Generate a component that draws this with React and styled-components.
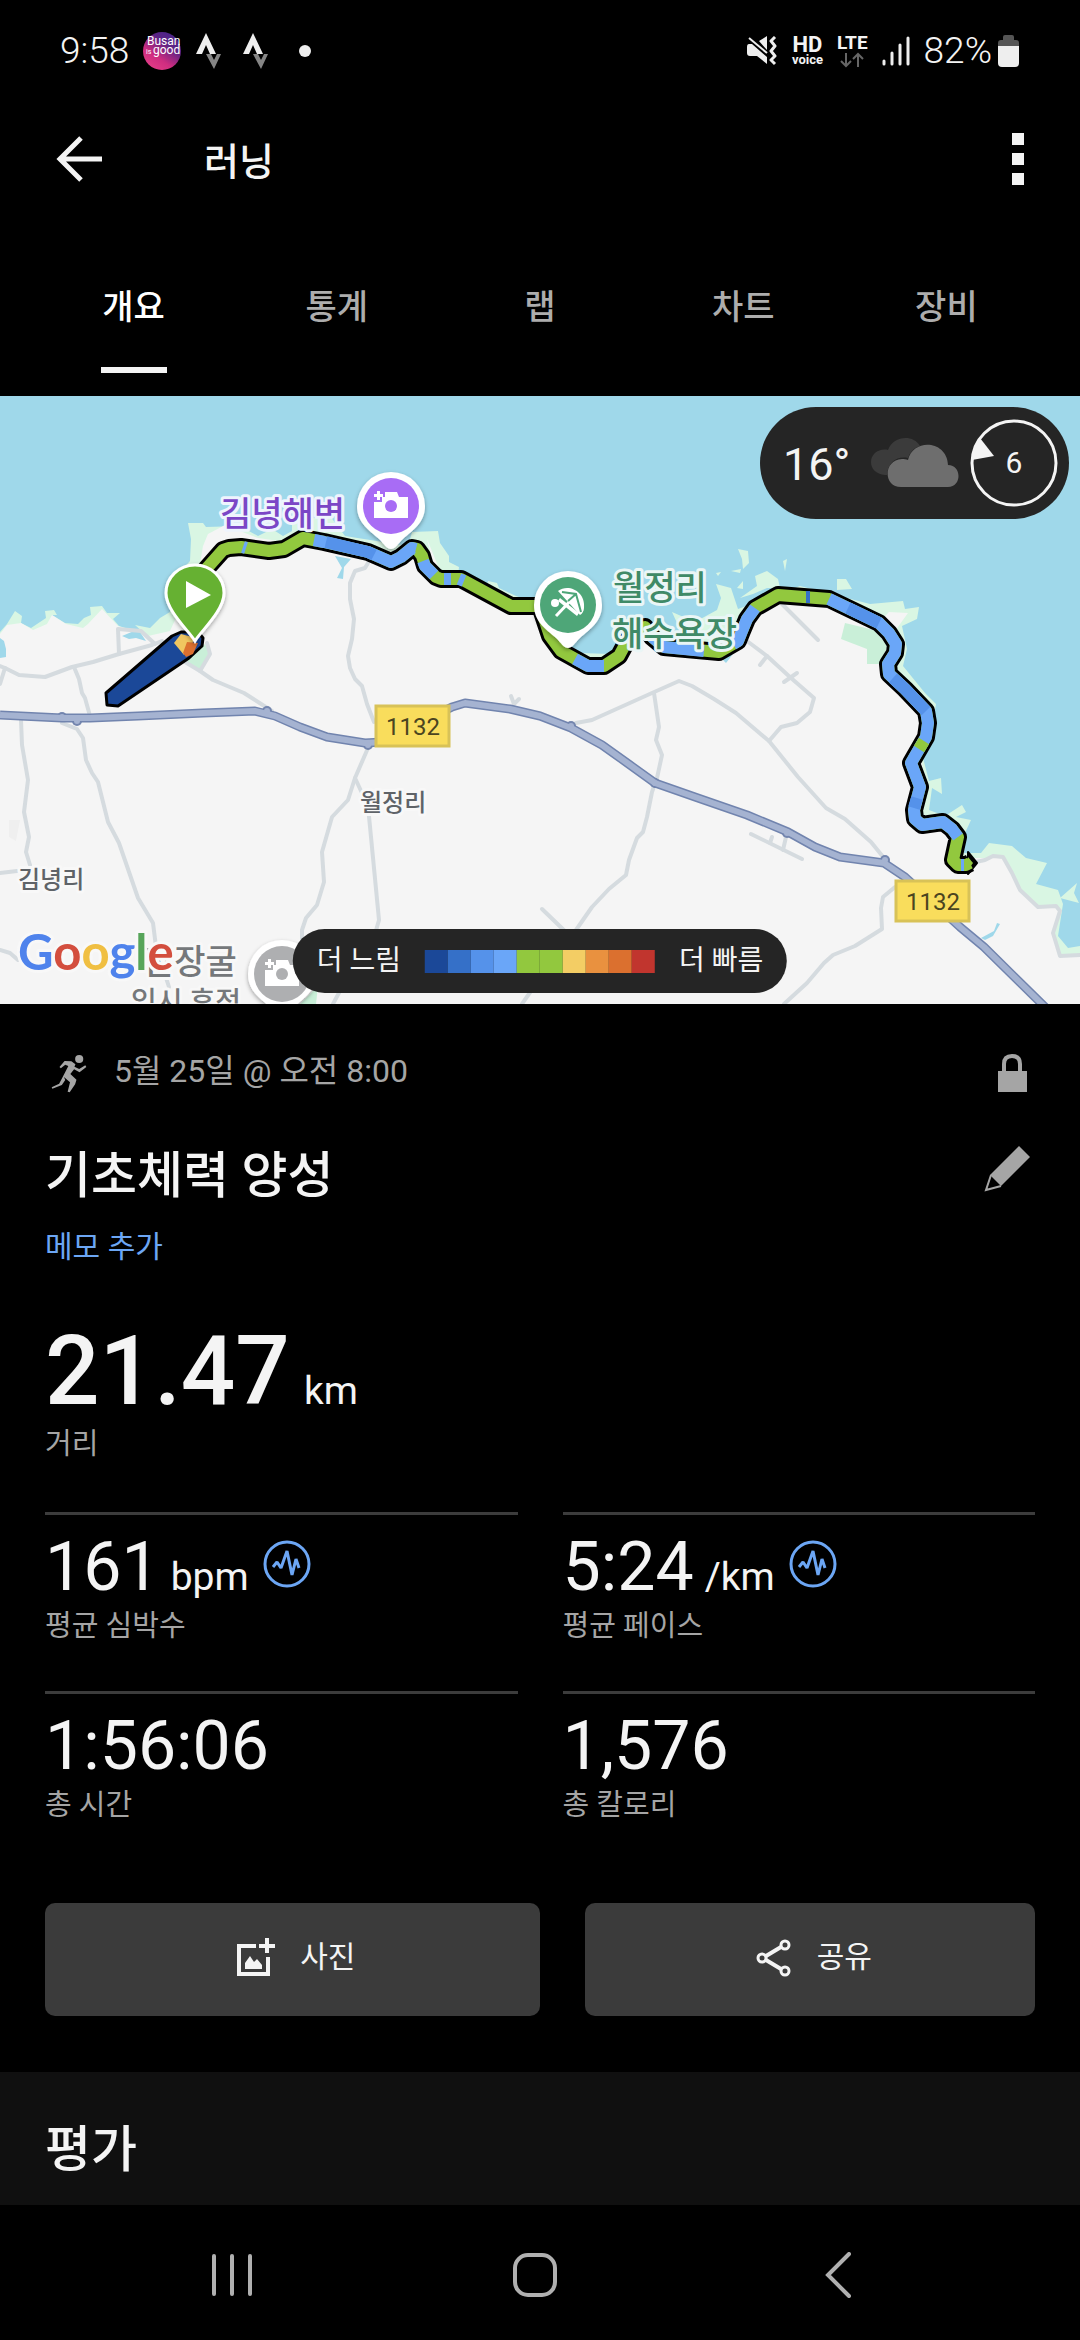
import React from 'react'
import styled, { createGlobalStyle } from 'styled-components'

const GlobalStyle = createGlobalStyle`
  * {
    box-sizing: border-box;
  }
  body {
    margin: 0;
    background: #000;
    color: #f4f4f4;
    font-family: Roboto, "Noto Sans CJK KR", sans-serif;
  }
  h1, h2, p, dl, dt, dd {
    margin: 0;
    font-weight: 400;
  }
  svg {
    display: block;
    flex: none;
  }
`

const IconButton = styled.button`
  display: flex;
  align-items: center;
  justify-content: center;
  padding: 0;
  border: 0;
  background: none;
  color: ${props => props.$color || '#f4f4f4'};
  cursor: pointer;
`

const StatusBar = styled.div`
  display: flex;
  align-items: center;
  justify-content: space-between;
  height: 102px;
  padding: 0 61px 0 60px;
`

const StatusGroup = styled.div`
  display: flex;
  align-items: center;
  gap: ${props => props.$gap}px;
`

const StatusText = styled.span`
  font-size: 37px;
  line-height: 40px;
  font-weight: 300;
`

const Battery = styled.div`
  display: flex;
  align-items: center;
  gap: 6px;
`

const Network = styled.div`
  display: flex;
  flex-direction: column;
  align-items: center;
  font-size: ${props => props.$size}px;
  line-height: 18px;
  font-weight: 700;
`

const NetworkSub = styled.span`
  font-size: 13px;
  line-height: 12px;
`

const AppBar = styled.header`
  display: flex;
  align-items: center;
  height: 114px;
  padding: 0 56px;
`

const AppTitle = styled.h1`
  flex: 1;
  margin-left: 102px;
  padding-top: 6px;
  font-size: 38px;
  line-height: 48px;
  font-weight: 500;
`

const Tabs = styled.nav`
  display: grid;
  grid-template-columns: repeat(5, 1fr);
  height: 180px;
  padding: 0 32px;
`

const Tab = styled.button`
  display: flex;
  justify-content: center;
  align-items: flex-start;
  padding: 0;
  border: 0;
  background: none;
  font-family: inherit;
  font-size: 34px;
  line-height: 40px;
  font-weight: 500;
  color: ${props => props.$active ? '#fff' : '#adadad'};
  cursor: pointer;
`

const TabLabel = styled.span`
  height: 157px;
  min-width: 66px;
  padding-top: 71px;
  text-align: center;
  border-bottom: 6px solid ${props => props.$active ? '#f4f4f4' : 'transparent'};
`

const MapArea = styled.section`
  position: relative;
  aspect-ratio: 1080 / 608;
  overflow: hidden;
  background: #9fd8ea;

  > svg {
    width: 100%;
    height: 100%;
  }
`

const Weather = styled.div`
  position: absolute;
  top: 11px;
  right: 11px;
  display: flex;
  align-items: center;
  height: 112px;
  padding: 0 11px 0 23px;
  border-radius: 56px;
  background: #252525;
`

const Temperature = styled.span`
  width: 88px;
  padding-top: 4px;
  font-size: 45px;
  line-height: 48px;
`

const Wind = styled.div`
  display: grid;
  place-items: center;
  margin-left: 11px;
  font-size: 30px;
  line-height: 36px;

  > * {
    grid-area: 1 / 1;
  }
`

const Legend = styled.div`
  position: absolute;
  bottom: 11px;
  left: 50%;
  transform: translateX(-50%);
  display: flex;
  align-items: center;
  gap: 24px;
  height: 64px;
  padding: 0 24px;
  border-radius: 32px;
  background: #252525;
  font-size: 28px;
  line-height: 40px;
  white-space: nowrap;
`

const Scale = styled.div`
  display: flex;
`

const Swatch = styled.span`
  width: 23px;
  height: 23px;
  background: ${props => props.$color};
`

const Summary = styled.main`
  padding: 45px 45px 56px;
`

const MetaRow = styled.div`
  display: flex;
  align-items: center;
  gap: 27px;
  height: 48px;
  padding: 0 4px 0 6px;
  font-size: 32px;
  line-height: 40px;
  color: #a5a5a5;
`

const DateText = styled.span`
  flex: 1;
  padding-bottom: 5px;
`

const TitleRow = styled.div`
  display: flex;
  align-items: center;
  justify-content: space-between;
  height: 60px;
  margin-top: 45px;
  padding-right: 4px;
`

const Heading = styled.h2`
  padding-top: 8px;
  font-size: 50px;
  line-height: 60px;
  font-weight: 500;
`

const MemoLink = styled.a`
  display: block;
  width: fit-content;
  margin-top: 25px;
  font-size: 30px;
  line-height: 40px;
  color: #6ca6f4;
  text-decoration: none;
`

const Distance = styled.dl`
  display: flex;
  flex-direction: column-reverse;
  margin-top: 56px;
`

const Value = styled.dd`
  display: flex;
  align-items: baseline;
  gap: ${props => props.$big ? 14 : 11}px;
  font-size: ${props => props.$big ? 96 : 68}px;
  line-height: ${props => props.$big ? 96 : 68}px;
  font-weight: ${props => props.$big ? 500 : 400};

  svg {
    align-self: flex-start;
    margin: 7px 0 0 3px;
  }
`

const Unit = styled.span`
  font-size: 39px;
  line-height: 48px;
  font-weight: 400;
`

const Caption = styled.dt`
  margin-top: 5px;
  font-size: 29px;
  line-height: 40px;
  color: #a5a5a5;
`

const StatGrid = styled.dl`
  display: grid;
  grid-template-columns: 1fr 1fr;
  gap: 45px;
  margin-top: 48px;
`

const Stat = styled.div`
  display: flex;
  flex-direction: column-reverse;
  padding-top: 18px;
  border-top: 3px solid #3c3c3c;
`

const Actions = styled.div`
  display: flex;
  gap: 45px;
  margin-top: 78px;
`

const ActionButton = styled.button`
  display: flex;
  flex: ${props => props.$grow} 1 0;
  align-items: center;
  justify-content: center;
  gap: 25px;
  height: 113px;
  padding: 0 0 4px 8px;
  border: 0;
  border-radius: 10px;
  background: #3b3b3b;
  color: #f4f4f4;
  font-family: inherit;
  font-size: 30px;
  line-height: 40px;
  cursor: pointer;
`

const ActionLabel = styled.span`
  padding-bottom: 2px;
`

const Rating = styled.section`
  height: 133px;
  padding: 40px 45px 0;
  background: #101010;
`

const NavBar = styled.nav`
  display: grid;
  grid-template-columns: repeat(3, 1fr);
  height: 135px;
  padding: 5px 91px 0 80px;
`

const TABS = ['개요', '통계', '랩', '차트', '장비']

const PACE_COLORS = [
  '#1b4898', '#3570c8', '#5592ea', '#6aa6f8', '#92c83e',
  '#92c83e', '#f3cd64', '#e9913f', '#db702f', '#c1352e'
]

const GREEN = '#92c83e'
const BLUE = '#6aa6f8'
const MID_BLUE = '#5592ea'

const ROUTE = '195,186 207,172 223,154 229,152 241,151 269,155 284,153 303,142 324,146 368,156 391,166 401,161 412,152 417,153 422,160 425,170 436,181 441,183 461,183 511,210 540,210 545,225 550,240 561,255 588,270 604,270 619,260 626,247 636,233 645,231 652,241 664,251 719,256 738,245 742,235 747,223 755,212 778,199 829,203 879,227 889,237 896,248 895,257 888,268 889,278 905,293 926,315 928,327 926,341 911,367 920,391 914,414 915,423 922,429 943,426 952,433 958,441 956,450 953,464 958,469 966,469 970,467'

const PACE_SEGMENTS = [
  [BLUE, '243,151 246,152'],
  [BLUE, '314,144 324,146 368,156 391,166 401,161 412,152 416,153'],
  [MID_BLUE, '326,146 368,156 374,159'],
  [BLUE, '423,165 425,170 434,179'],
  [BLUE, '444,183 451,183'],
  [BLUE, '459,183 464,185'],
  [BLUE, '575,263 588,270 604,270'],
  [BLUE, '652,241 664,251 704,255'],
  [BLUE, '733,248 738,245 742,235 747,223 755,212'],
  ['#3570c8', '806,201 810,201'],
  [BLUE, '829,203 879,227 889,237 896,248 895,257 888,268 889,278 905,293 926,315 928,327 926,341 911,367 920,391 914,414 915,423 922,429 943,426 952,433 958,441'],
  [MID_BLUE, '848,212 879,227'],
  [MID_BLUE, '893,282 905,293 926,315'],
  [MID_BLUE, '917,402 914,412'],
  [GREEN, '924,345 919,353'],
  [BLUE, '961,469 964,469']
]

const ROADS = [
  '0,270 5,272 19,279 45,281 72,271 93,266 119,258 152,249 162,245',
  '119,258 118,233 141,235 155,248',
  '74,271 79,283 82,297 85,302 90,320',
  '5,272 0,288',
  '207,247 210,258 200,275',
  '180,263 200,275 213,284 244,297 272,315',
  '368,167 365,172 355,175 350,187 350,203 354,223 352,243 348,260 350,272 355,283 362,290 367,308 374,326',
  '781,207 818,244',
  '747,245 767,260 791,282 814,302 810,316 797,327 781,331 769,345',
  '767,260 760,269',
  '797,277 784,286',
  '576,327 592,324 652,297 679,285 692,290 714,303 736,317 769,345 798,381 826,412 845,423 871,446 884,462',
  '654,297 659,331 656,344 662,359 657,382 652,396 647,421 643,436 637,442 629,464 626,479 609,493 592,511 576,534',
  '751,438 802,463',
  '772,441 770,447',
  '786,441 783,454',
  '542,513 570,540',
  '895,491 883,501 881,512 882,533 855,550 833,559 824,567 807,587 784,608',
  '21,324 22,349 28,384 24,416 29,441 26,456 30,469',
  '62,327 77,333 83,342 86,364 92,377 98,386 108,426 119,447 138,502 153,527 156,551 169,591',
  '368,352 355,382 348,404 332,421 322,456 324,486 317,509 306,522 302,534 302,550',
  '355,382 368,410 379,524 373,545',
  '341,593 333,608',
  '531,595 522,608',
  '0,477 17,475',
  '0,554 10,557 18,564',
  '511,300 514,308 519,303',
  '971,467 985,464 993,460 1003,461 1012,477 1020,494 1038,511 1056,510 1060,515 1053,537 1060,560 1080,559'
]

const HIGHWAYS = [
  '0,319 62,322 90,322 138,320 203,317 255,315 275,320 300,331 327,341 365,347 400,345',
  '440,317 452,311 465,307 510,313 540,320 571,332 602,349 630,369 655,387 695,401 747,419 788,436 815,451 840,461 884,467 905,481 960,531 984,551 1046,612'
]

const JUNCTIONS = [[62, 321], [77, 325], [267, 315], [368, 349], [571, 330], [655, 387], [787, 437], [885, 464]]

const ISLETS = [
  '738,153 748,155 749,167 743,173 742,163',
  '783,165 787,163 785,175',
  '731,175 741,173 740,177',
  '755,180 767,175 778,183 780,192 767,192 753,198 740,202 757,190',
  '716,177 721,176 718,180',
  '737,192 743,185 743,193',
  '837,183 846,183 852,193 837,194',
  '1060,502 1077,487 1074,497 1079,507'
]

function CameraGlyph ({ hole }) {
  return (
    <g>
      <path d="M-17 -4 h8 v-5 h3 v-5 h12 l2 5 h9 v21 h-34 z" fill="#fff" />
      <path d="M-17 -12 h3 v-3 h3 v3 h3 v3 h-3 v3 h-3 v-3 h-3 z" fill="#fff" />
      <circle r="6" fill={ hole } />
    </g>
  )
}

function PlaceMarker ({ x, y, color, children }) {
  return (
    <g transform={ `translate(${x} ${y})` }>
      <path
        d="M0 43 C-4 43 -7 38 -12 33 C-22 24 -34 17 -34 0 A34 34 0 0 1 34 0 C34 17 22 24 12 33 C7 38 4 43 0 43 Z"
        fill="#fff"
        filter="url(#shadow)"
      />
      <circle r="28" fill={ color } />
      { children }
    </g>
  )
}

function RoadShield ({ x, y }) {
  return (
    <g>
      <rect x={ x + 1 } y={ y + 1 } width="73" height="40" fill="#f9dd5c" stroke="#d8c257" strokeWidth="3" />
      <text x={ x + 38 } y={ y + 30 } textAnchor="middle" fontSize="24" fill="#4b4520">1132</text>
    </g>
  )
}

const MapText = styled.text`
  font-size: ${props => props.$size}px;
  font-weight: 500;
  fill: ${props => props.$color};
  stroke: ${props => props.$halo || '#f8f8f8'};
  stroke-width: 6px;
  stroke-linejoin: round;
  paint-order: stroke;
`

const GoogleText = styled(MapText)`
  font-family: Lato, sans-serif;
  font-weight: 700;
`

function RouteMap () {
  return (
    <svg viewBox="0 0 1080 608" preserveAspectRatio="xMidYMid slice" role="img" aria-label="지도">
      <defs>
        <filter id="shadow" x="-20%" y="-20%" width="140%" height="150%">
          <feDropShadow dx="0" dy="2" stdDeviation="2" floodOpacity="0.35" />
        </filter>
      </defs>

      <path
        fill="#d9f6e3"
        d="M0 236 L7 228 15 215 22 220 21 227 31 232 46 222 45 215 54 214 57 219 52 219 65 227 78 228 84 222 91 219 90 211 102 210 107 217 120 217 113 223 119 230 145 238 135 229 150 232 160 222 170 216 173 197 181 175 190 165 191 143 188 127 203 127 206 131 240 130 258 140 272 133 283 140 292 135 292 125 330 120 345 140 408 150 412 136 438 135 440 147 449 160 449 166 459 171 458 180 475 187 487 190 488 185 497 187 499 192 516 200 540 208 560 245 580 257 610 258 625 240 650 232 683 240 672 216 695 226 717 214 721 202 716 188 731 192 738 213 760 205 800 190 870 208 903 205 905 213 919 211 917 223 902 230 907 253 903 270 925 297 936 308 930 345 923 362 929 385 941 382 942 398 932 392 929 414 945 420 962 409 966 416 956 421 971 424 965 437 964 457 981 457 989 447 1012 450 1026 462 1047 467 1036 488 1058 494 1063 508 1058 540 1068 552 1080 550 V608 H0 Z"
      />
      <path
        fill="#f5f5f5"
        d="M0 238 L7 229 21 227 33 234 47 228 52 219 66 228 83 232 88 228 102 213 118 230 148 240 170 235 180 213 198 180 203 150 208 138 225 129 240 135 258 142 300 148 380 160 430 155 427 143 440 175 512 205 545 225 560 255 600 264 625 245 655 235 670 250 720 250 745 225 775 200 830 205 880 225 889 216 908 217 895 235 900 250 893 275 930 312 922 365 925 400 918 425 960 440 958 462 990 462 1003 462 1020 494 1038 511 1056 510 1060 515 1053 537 1060 560 1080 559 V608 H0 Z"
      />
      { ISLETS.map(points => <polygon key={ points } points={ points } fill="#d9f6e3" />) }
      <path d="M845 227 L874 234 888 250 879 268 867 268 867 253 841 243 Z" fill="#c9efd8" />
      <path d="M184 265 L205 248 210 258 200 275 Z" fill="#c9efd8" />
      <path d="M300 608 L318 590 316 608 Z" fill="#c9efd8" />
      <path d="M0 242 l4 3 2 8 v8 l-6 1 z M122 240 l12 -5 6 1 6 9 -10 -3 -7 1 z M335 160 l16 3 -7 8 -1 12 -6 -1 5 -10 z" fill="#9fd8ea" />
      <path d="M981 542 L994 535 997 527 1000 528 993 540 985 544 Z M722 263 l11 -5 -7 9 z" fill="#9fd8ea" />
      <path d="M9 424 h11 l-4 21 l-7 -4 z" fill="#efefef" />

      <g fill="none" stroke="#d5dbdf" strokeWidth="4" strokeLinejoin="round" strokeLinecap="round">
        { ROADS.map(points => <polyline key={ points } points={ points } />) }
      </g>

      <g fill="#7486ae">
        { JUNCTIONS.map(([cx, cy]) => <circle key={ cx } cx={ cx } cy={ cy } r="5" />) }
      </g>
      <g fill="none" strokeLinejoin="round">
        { HIGHWAYS.map(points => <polyline key={ points } points={ points } stroke="#7184ae" strokeWidth="9" />) }
        { HIGHWAYS.map(points => <polyline key={ points } points={ points } stroke="#a5b3d1" strokeWidth="6" />) }
      </g>
      <g fill="#a5b3d1">
        { JUNCTIONS.map(([cx, cy]) => <circle key={ cx } cx={ cx } cy={ cy } r="3" />) }
      </g>

      <RoadShield x={ 375 } y={ 309 } />
      <RoadShield x={ 895 } y={ 484 } />

      <path d="M106 297 L172 240 181 236 198 236 203 242 202 250 189 262 118 310 107 309 Z" fill="#1b4898" stroke="#000" strokeWidth="3" strokeLinejoin="round" />
      <path d="M174 247 L181 238 196 242 184 259 Z" fill="#f0c660" />
      <path d="M183 257 L187 246 198 247 193 258 186 261 Z" fill="#db702f" />

      {/* arrow head closing the end of the track */}
      <path d="M968 456 L977 467 968 478 Z" fill="#000" stroke="#000" strokeWidth="2" strokeLinejoin="round" />
      <g fill="none" strokeLinejoin="round">
        <polyline points={ ROUTE } stroke="#000" strokeWidth="18" />
        <polyline points={ ROUTE } stroke={ GREEN } strokeWidth="12" />
        { PACE_SEGMENTS.map(([color, points]) => (
          <polyline key={ points } points={ points } stroke={ color } strokeWidth="12" />
        )) }
      </g>
      <path d="M968 461 L973 467 968 474 Z" fill={ GREEN } />

      <MapText x="220" y="130" $size="34" $color="#7b46c6" $halo="#eef4fd">김녕해변</MapText>
      <MapText x="613" y="204" $size="34" $color="#3f8a67" $halo="#eaf6f6">월정리</MapText>
      <MapText x="612" y="250" $size="34" $color="#3f8a67" $halo="#eaf6f6">해수욕장</MapText>
      <MapText x="360" y="415" $size="24" $color="#5f6368">월정리</MapText>
      <MapText x="18" y="492" $size="24" $color="#5f6368">김녕리</MapText>
      <MapText x="143" y="578" $size="34" $color="#75787b">만장굴</MapText>
      <MapText x="131" y="616" $size="28" $color="#75787b">임시 휴점</MapText>

      <PlaceMarker x={ 391 } y={ 110 } color="#a86cf5">
        <CameraGlyph hole="#a86cf5" />
      </PlaceMarker>
      <PlaceMarker x={ 282 } y={ 578 } color="#aeafb1">
        <CameraGlyph hole="#aeafb1" />
      </PlaceMarker>
      <PlaceMarker x={ 568 } y={ 209 } color="#4ea678">
        <g fill="#fff">
          <circle cx="-13" cy="-2" r="4" />
          <path d="M-10 -14 C0 -22 18 -14 16 3 C16 6 14 9 12 10 Z" />
          <path d="M-8 -7 L11 8 9 11 -10 -4 Z" />
        </g>
        <path d="M-12 11 L6 -8" stroke="#fff" strokeWidth="3" />
        <path d="M-6 -13 L8 -11 L13 7 M0 -4 L8 -11" stroke="#4ea678" strokeWidth="2" fill="none" />
      </PlaceMarker>

      <path
        d="M195 245 C190 236 166 215 166 197 A29 28 0 0 1 224 197 C224 215 200 236 195 245 Z"
        fill="#66b132"
        stroke="#fff"
        strokeWidth="3"
        filter="url(#shadow)"
      />
      <path d="M186 185 L211 199 186 212 Z" fill="#fff" />

      <GoogleText x="18" y="574" $size="49" $color="#4f83ec">
        G<tspan fill="#d34e3e">o</tspan><tspan fill="#f0bf42">o</tspan>g<tspan fill="#57a55a">l</tspan><tspan fill="#d34e3e">e</tspan>
      </GoogleText>
    </svg>
  )
}

function StravaIcon () {
  return (
    <svg width="26" height="36" viewBox="0 0 26 36">
      <path d="M10 0 L20 21 H14 L10 12 6 21 H0 Z" fill="#eee" />
      <path d="M10 21 H15 L18 27 21 21 H25 L18 36 Z" fill="#858585" />
    </svg>
  )
}

function PulseIcon () {
  return (
    <svg width="48" height="48" viewBox="0 0 48 48" fill="none" stroke="#6ca6f4">
      <circle cx="24" cy="24" r="22" strokeWidth="3" />
      <path d="M10 27 L14 22 18 28 24 11 29 35 33 19 36 28" strokeWidth="3" strokeLinejoin="bevel" />
    </svg>
  )
}

function StatItem ({ value, unit, label, pulse }) {
  return (
    <Stat>
      <Caption>{ label }</Caption>
      <Value>
        { value }
        { unit && <Unit>{ unit }</Unit> }
        { pulse && <PulseIcon /> }
      </Value>
    </Stat>
  )
}

export default function App () {
  return (
    <>
      <GlobalStyle />
      <StatusBar>
        <StatusGroup $gap={ 21 }>
          <StatusGroup $gap={ 14 }>
            <StatusText>9:58</StatusText>
            <svg width="39" height="39" viewBox="0 0 39 39">
              <defs>
                <linearGradient id="busan" x1="0.2" y1="0.9" x2="0.75" y2="0.1">
                  <stop offset="0" stopColor="#e03a86" />
                  <stop offset="0.3" stopColor="#cf2d80" />
                  <stop offset="0.75" stopColor="#5b2384" />
                  <stop offset="1" stopColor="#4f2589" />
                </linearGradient>
              </defs>
              <circle cx="19" cy="19" r="19" fill="url(#busan)" />
              <text x="4" y="13" fontSize="12" fill="#fff">Busan</text>
              <text x="3" y="22" fontSize="7" fill="#fff">is</text>
              <text x="10" y="22" fontSize="12" fill="#fff">good</text>
            </svg>
            <StravaIcon />
          </StatusGroup>
          <StravaIcon />
          <svg width="32" height="12" viewBox="0 0 32 12">
            <circle cx="15" cy="6" r="6" fill="#eee" />
          </svg>
        </StatusGroup>
        <StatusGroup $gap={ 14 }>
          <svg width="32" height="30" viewBox="0 0 32 30">
            <path d="M3 8 H6 L21 21 V28 L11 20 H4 Q1 20 1 17 V11 Q1 8 3 8 Z M13 5 L21 0 V14 Z" fill="#eee" />
            <path d="M3 2 L21 17" stroke="#eee" strokeWidth="2" />
            <path d="M29 1 L25 5 29 10 25 15 29 20 25 24 29 28" fill="none" stroke="#eee" strokeWidth="3" strokeLinejoin="round" />
          </svg>
          <Network $size={ 22 }>
            HD
            <NetworkSub>voice</NetworkSub>
          </Network>
          <Network $size={ 19 }>
            LTE
            <svg width="26" height="16" viewBox="0 0 26 16" fill="none" stroke="#666" strokeWidth="2">
              <path d="M7 1 V14 M2 9 L7 14 12 9 M19 15 V2 M14 7 L19 2 24 7" />
            </svg>
          </Network>
          <svg width="28" height="30" viewBox="0 0 28 30" stroke="#eee" strokeWidth="3" strokeLinecap="round">
            <path d="M2 25 V28 M10 17 V28 M18 9 V28 M26 2 V28" />
          </svg>
          <Battery>
            <StatusText>82%</StatusText>
            <svg width="21" height="32" viewBox="0 0 21 32">
              <path d="M0 11 V8 Q0 5 3 5 H5 V2 Q5 0 7 0 H14 Q16 0 16 2 V5 H18 Q21 5 21 8 V11 Z" fill="#555" />
              <path d="M0 11 H21 V28 Q21 32 17 32 H4 Q0 32 0 28 Z" fill="#eee" />
            </svg>
          </Battery>
        </StatusGroup>
      </StatusBar>

      <AppBar>
        <IconButton aria-label="뒤로">
          <svg width="46" height="46" viewBox="0 0 46 46" fill="none" stroke="currentColor" strokeWidth="5">
            <path d="M25 2 L4 23 25 44 M4 23 H46" />
          </svg>
        </IconButton>
        <AppTitle>러닝</AppTitle>
        <IconButton aria-label="더보기">
          <svg width="12" height="52" viewBox="0 0 12 52" fill="currentColor">
            <path d="M0 0 H12 V12 H0 Z M0 20 H12 V32 H0 Z M0 40 H12 V52 H0 Z" />
          </svg>
        </IconButton>
      </AppBar>

      <Tabs>
        { TABS.map((label, i) => (
          <Tab key={ label } $active={ i === 0 }>
            <TabLabel $active={ i === 0 }>{ label }</TabLabel>
          </Tab>
        )) }
      </Tabs>

      <MapArea>
        <RouteMap />
        <Weather>
          <Temperature>16°</Temperature>
          <svg width="88" height="50" viewBox="0 0 88 50">
            <path d="M14 37 C5 36 0 31 0 24 C0 16 8 10 17 12 C22 -2 42 -4 49 8 C42 10 39 15 37 20 C26 18 17 24 16 37 Z" fill="#3b3b3b" />
            <path d="M30 49 C12 49 12 22 31 21 C33 21 35 21 37 22 C42 0 76 2 77 27 C91 27 91 49 77 49 Z" fill="#6e6e6e" />
          </svg>
          <Wind>
            <svg width="88" height="90" viewBox="0 0 88 90">
              <circle cx="44" cy="45" r="42" fill="none" stroke="#f4f4f4" strokeWidth="3" />
              <path d="M10 20 L24 38 2 42 Q3 30 10 20 Z" fill="#f4f4f4" />
            </svg>
            <span>6</span>
          </Wind>
        </Weather>
        <Legend>
          <span>더 느림</span>
          <Scale>
            { PACE_COLORS.map((color, i) => <Swatch key={ i } $color={ color } />) }
          </Scale>
          <span>더 빠름</span>
        </Legend>
      </MapArea>

      <Summary>
        <MetaRow>
          <svg width="36" height="39" viewBox="146 98 106 117" preserveAspectRatio="none" fill="currentColor">
            <circle cx="229" cy="113" r="12" />
            <path d="M186 119 L206 120 218 129 215 136 229 143 247 132 250 137 230 153 214 144 203 158 221 175 217 189 201 213 195 211 202 183 184 167 188 176 178 191 150 202 148 198 170 187 180 168 185 158 197 134 188 130 175 141 171 137 Z" />
          </svg>
          <DateText>5월 25일 @ 오전 8:00</DateText>
          <svg width="37" height="39" viewBox="0 0 37 39">
            <path d="M10 18 V10 Q10 2 18 2 Q26 2 26 10 V18" fill="none" stroke="currentColor" strokeWidth="4" />
            <path d="M4 17 H33 V38 H4 Z" fill="currentColor" />
          </svg>
        </MetaRow>
        <TitleRow>
          <Heading>기초체력 양성</Heading>
          <IconButton $color="#a5a5a5" aria-label="이름 편집">
            <svg width="47" height="52" viewBox="0 0 47 52" fill="currentColor">
              <path d="M35 0 L46 11 17 40 6 29 Z" />
              <path d="M7 29 L2 44 17 40" fill="none" stroke="currentColor" strokeWidth="2" />
            </svg>
          </IconButton>
        </TitleRow>
        <MemoLink href="#memo">메모 추가</MemoLink>

        <Distance>
          <Caption>거리</Caption>
          <Value $big>21.47<Unit>km</Unit></Value>
        </Distance>

        <StatGrid>
          <StatItem value="161" unit="bpm" label="평균 심박수" pulse />
          <StatItem value="5:24" unit="/km" label="평균 페이스" pulse />
          <StatItem value="1:56:06" label="총 시간" />
          <StatItem value="1,576" label="총 칼로리" />
        </StatGrid>

        <Actions>
          <ActionButton $grow={ 11 }>
            <svg width="38" height="39" viewBox="0 0 38 39" fill="none" stroke="currentColor">
              <path d="M19 8 H2 V36 H31 V19" strokeWidth="4" />
              <path d="M30 0 V15 M22 8 H38" strokeWidth="4" />
              <path d="M8 31 V25 L13 18 17 24 20 21 25 27 V31 Z" fill="currentColor" stroke="none" />
            </svg>
            <ActionLabel>사진</ActionLabel>
          </ActionButton>
          <ActionButton $grow={ 10 }>
            <svg width="36" height="40" viewBox="0 0 36 40" fill="none" stroke="currentColor" strokeWidth="3">
              <circle cx="6" cy="20" r="4" />
              <circle cx="29" cy="7" r="4" />
              <circle cx="29" cy="33" r="4" />
              <path d="M10 18 L25 9 M10 22 L25 31" strokeWidth="4" />
            </svg>
            <ActionLabel>공유</ActionLabel>
          </ActionButton>
        </Actions>
      </Summary>

      <Rating>
        <Heading>평가</Heading>
      </Rating>

      <NavBar>
        <IconButton $color="#b0b0b0" aria-label="최근 앱">
          <svg width="40" height="44" viewBox="0 0 40 44" stroke="currentColor" strokeWidth="4" strokeLinecap="round">
            <path d="M2 3 V41 M20 3 V41 M38 3 V41" />
          </svg>
        </IconButton>
        <IconButton $color="#b0b0b0" aria-label="홈">
          <svg width="44" height="44" viewBox="0 0 44 44" fill="none" stroke="currentColor" strokeWidth="4">
            <rect x="2" y="2" width="40" height="40" rx="13" />
          </svg>
        </IconButton>
        <IconButton $color="#b0b0b0" aria-label="뒤로 가기">
          <svg width="26" height="46" viewBox="0 0 26 46" fill="none" stroke="currentColor" strokeWidth="4" strokeLinecap="round">
            <path d="M24 2 L3 23 24 44" />
          </svg>
        </IconButton>
      </NavBar>
    </>
  )
}
